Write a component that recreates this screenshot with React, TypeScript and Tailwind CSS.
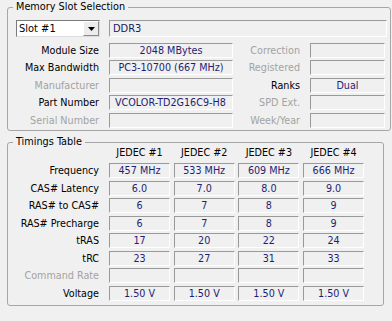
import React from "react";

const field =
  "h-[15px] border-t border-l border-t-[#999999] border-l-[#999999] border-b border-r border-b-white border-r-white bg-[#f0f0f0] leading-[13px] text-[#1e1e74] whitespace-nowrap overflow-hidden";

const slotRows = [
  { label: "Module Size", value: "2048 MBytes", center: true, right: "Correction", rightOff: true, rightValue: "" },
  { label: "Max Bandwidth", value: "PC3-10700 (667 MHz)", center: true, right: "Registered", rightOff: true, rightValue: "" },
  { label: "Manufacturer", off: true, value: "", right: "Ranks", rightValue: "Dual" },
  { label: "Part Number", value: "VCOLOR-TD2G16C9-H8", right: "SPD Ext.", rightOff: true, rightValue: "" },
  { label: "Serial Number", off: true, value: "", right: "Week/Year", rightOff: true, rightValue: "" },
];

const timings = [
  { label: "Frequency", values: ["457 MHz", "533 MHz", "609 MHz", "666 MHz"] },
  { label: "CAS# Latency", values: ["6.0", "7.0", "8.0", "9.0"] },
  { label: "RAS# to CAS#", values: ["6", "7", "8", "9"] },
  { label: "RAS# Precharge", values: ["6", "7", "8", "9"] },
  { label: "tRAS", values: ["17", "20", "22", "24"] },
  { label: "tRC", values: ["23", "27", "31", "33"] },
  { label: "Command Rate", off: true, values: ["", "", "", ""] },
  { label: "Voltage", values: ["1.50 V", "1.50 V", "1.50 V", "1.50 V"] },
];

function Group({ title, className, children }: { title: string; className: string; children: React.ReactNode }) {
  return (
    <div className={`relative border border-[#a6a6a6] rounded-[3px] ${className}`}>
      <span className="absolute left-[5px] top-[-8px] px-[3px] bg-[#f0f0f0] leading-[14px] text-[10.8px] text-black">
        {title}
      </span>
      {children}
    </div>
  );
}

export default function App() {
  return (
    <div className="w-[392px] h-[321px] bg-[#f0f0f0] overflow-hidden pt-[7px] font-['DejaVu_Sans_Condensed',sans-serif] text-[10.7px] text-black">
      {/* Memory Slot Selection */}
      <Group title="Memory Slot Selection" className="ml-[7px] w-[384px] h-[124px] pt-[12px] pl-[8px]">
        <div className="flex h-[17px]">
          <div className="w-[84px] h-[17px] flex bg-white border border-t-[#7a7a7a] border-l-[#7a7a7a] border-b-[#dcdcdc] border-r-[#dcdcdc]">
            <span className="flex-1 pl-[2px] leading-[15px] text-[11px]">Slot #1</span>
            <div className="w-[16px] h-[15px] flex items-center justify-center bg-[#ececec] border border-t-white border-l-white border-b-[#8a8a8a] border-r-[#8a8a8a]">
              <svg width="7" height="4" viewBox="0 0 7 4">
                <path d="M0 0h7L3.5 4z" fill="#000" />
              </svg>
            </div>
          </div>
          <div className={`${field} ml-[9px] w-[278px] !h-[17px] !leading-[15px] pl-[3px] text-[11px] !text-[#1a1a5e]`}>DDR3</div>
        </div>
        <div className="mt-[5.5px] flex flex-col gap-[2.5px]">
          {slotRows.map((r) => (
            <div key={r.label} className="flex h-[15px] items-center">
              <span className={`w-[84px] pr-[1px] text-right leading-[15px] ${r.off ? "text-[#a3a3a3]" : ""}`}>{r.label}</span>
              <div className={`${field} ml-[9px] w-[124px] ${r.center ? "text-center" : "pl-[5px]"}`}>{r.value}</div>
              <span className={`w-[67px] text-right leading-[15px] ${r.rightOff ? "text-[#a3a3a3]" : ""}`}>{r.right}</span>
              <div className={`${field} ml-[10px] w-[75px] text-center`}>{r.rightValue}</div>
            </div>
          ))}
        </div>
      </Group>

      {/* Timings Table */}
      <Group title="Timings Table" className="ml-[7px] mt-[11px] w-[377px] h-[164px] pt-[3px] pl-[8px]">
        <div className="flex h-[14px] leading-[14px]">
          <span className="w-[84px]" />
          <div className="ml-[9px] grid grid-cols-[repeat(4,61px)] gap-x-[3.7px] text-center">
            <span>JEDEC #1</span>
            <span>JEDEC #2</span>
            <span>JEDEC #3</span>
            <span>JEDEC #4</span>
          </div>
        </div>
        <div className="mt-[3px] flex flex-col gap-[2.5px]">
          {timings.map((t) => (
            <div key={t.label} className="flex h-[15px] items-center">
              <span className={`w-[84px] pr-[1px] text-right leading-[15px] ${t.off ? "text-[#a3a3a3]" : ""}`}>{t.label}</span>
              <div className="ml-[9px] grid grid-cols-[repeat(4,61px)] gap-x-[3.7px]">
                {t.values.map((v, i) => (
                  <div key={i} className={`${field} text-center`}>{v}</div>
                ))}
              </div>
            </div>
          ))}
        </div>
      </Group>
    </div>
  );
}
